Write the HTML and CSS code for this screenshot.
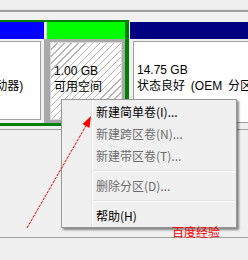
FILE: index.html
```html
<!DOCTYPE html>
<html>
<head>
<meta charset="utf-8">
<link rel="stylesheet" href="styles.css">
</head>
<body>
<div class="screen">
  <div class="toolbar"></div>
  <div class="rule"></div>
  <div class="gap-top"></div>
  <div class="disk">
    <div class="ext">
      <div class="part logical">
        <div class="bar"></div>
        <div class="body">
          <div class="box">
            <div class="line">新加卷 (E:)</div>
            <div class="line">15.00 GB NTFS</div>
            <div class="line">状态良好 (逻辑驱动器)</div>
          </div>
        </div>
      </div>
      <div class="part free">
        <div class="bar"></div>
        <div class="body">
          <div class="box hatch">
            <div class="line">&nbsp;</div>
            <div class="line">1.00 GB</div>
            <div class="line">可用空间</div>
          </div>
        </div>
      </div>
    </div>
    <div class="part primary">
      <div class="bar"></div>
      <div class="body">
        <div class="box">
          <div class="line">&nbsp;</div>
          <div class="line">14.75 GB</div>
          <div class="line wide">状态良好 (OEM 分区)</div>
        </div>
      </div>
    </div>
  </div>
  <div class="lower"></div>
  <div class="panel"></div>
  <div class="status"></div>
</div>

<div class="menu">
  <div class="item">新建简单卷(I)...</div>
  <div class="item disabled">新建跨区卷(N)...</div>
  <div class="item disabled">新建带区卷(T)...</div>
  <div class="sep"></div>
  <div class="item disabled">删除分区(D)...</div>
  <div class="sep"></div>
  <div class="item">帮助(H)</div>
</div>

<svg class="arrow" width="248" height="260" viewBox="0 0 248 260">
  <line x1="27" y1="228" x2="87" y2="124" stroke="#ff0000" stroke-width="1" stroke-dasharray="3 1"/>
  <polygon points="91,116 82.5,124 89.5,128" fill="#ff0000"/>
</svg>

<div class="watermark">百度经验</div>
</body>
</html>
```

FILE: styles.css
```css
html, body {
  margin: 0;
  padding: 0;
}
body {
  width: 248px;
  height: 260px;
  overflow: hidden;
  position: relative;
  background: #f0f0f0;
  font-family: "Liberation Sans", "Noto Sans CJK SC", sans-serif;
  font-size: 12px;
  color: #000;
}
.screen {
  display: flex;
  flex-direction: column;
  width: 248px;
  height: 260px;
}
.toolbar {
  height: 9px;
  background: #f0f0f0;
  border-bottom: 1px solid #e4e4e4;
}
.rule {
  height: 2px;
  background: #a0a0a0;
}
.gap-top {
  height: 8px;
  background: #f0f0f0;
}
.disk {
  display: flex;
  height: 106px;
  background: #f0f0f0;
}
.ext {
  display: flex;
  margin-left: -104px;
  border-top: 2px solid #008000;
  border-right: 4px solid #008000;
  border-bottom: 3px solid #008000;
  margin-right: 1px;
}
.part {
  display: flex;
  flex-direction: column;
}
.bar {
  height: 17px;
}
.logical {
  width: 148px;
}
.logical .bar {
  background: #0000ff;
}
.free {
  width: 81px;
}
.free .bar {
  background: #00ff00;
  margin-left: 3px;
}
.primary {
  flex: 1;
  padding-top: 2px;
}
.primary .bar {
  background: #000080;
}
.body {
  flex: 1;
  display: flex;
  padding: 2px 3px 3px 3px;
  background: #f0f0f0;
}
.free .body {
  background: #a9a9a9;
  padding: 3px 3px 3px 6px;
}
.box {
  flex: 1;
  background: #fff;
  border: 1px solid #a0a0a0;
  padding: 4px 0 0 3px;
  white-space: nowrap;
  overflow: hidden;
}
.line {
  height: 16px;
  line-height: 16px;
}
.line.wide {
  word-spacing: 2.5px;
}
.hatch {
  border-color: #d8d8d8;
  background: repeating-linear-gradient(135deg, #ffffff 0px, #ffffff 4px, #b4b4b4 4px, #b4b4b4 5px);
}
.logical .box {
  padding-left: 4px;
}
.primary .box {
  padding-left: 3px;
}
.lower {
  height: 3px;
  background: #f0f0f0;
  border-bottom: 1px solid #a0a0a0;
}
.panel {
  height: 107px;
  background: #f0f0f0;
  border-bottom: 1px solid #a0a0a0;
}
.status {
  flex: 1;
  background: #f0f0f0;
}

.menu {
  position: absolute;
  left: 61px;
  top: 99px;
  width: 174px;
  padding: 1px 0 0 0;
  background: #f0f0f0;
  border: 1px solid #979797;
  box-shadow: 2px 2px 2px rgba(0, 0, 0, 0.45);
  background-image: linear-gradient(to right, transparent 29px, #e2e3e3 29px, #e2e3e3 30px, #ffffff 30px, #ffffff 31px, transparent 31px);
}
.item {
  height: 22px;
  line-height: 22px;
  padding-left: 34px;
  font-family: "Noto Sans CJK SC", "Liberation Sans", sans-serif;
  font-size: 12px;
  color: #000;
}
.item.disabled {
  color: #6d6d6d;
}
.sep {
  height: 8px;
  margin-left: 31px;
  margin-right: 2px;
  background: linear-gradient(to bottom, transparent 3px, #e0e0e0 3px, #e0e0e0 4px, #ffffff 4px, #ffffff 5px, transparent 5px);
}
.arrow {
  position: absolute;
  left: 0;
  top: 0;
}
.watermark {
  position: absolute;
  left: 172px;
  top: 224px;
  font-family: "Noto Sans CJK SC", sans-serif;
  font-size: 12px;
  line-height: 16px;
  color: #ff0000;
}
```
